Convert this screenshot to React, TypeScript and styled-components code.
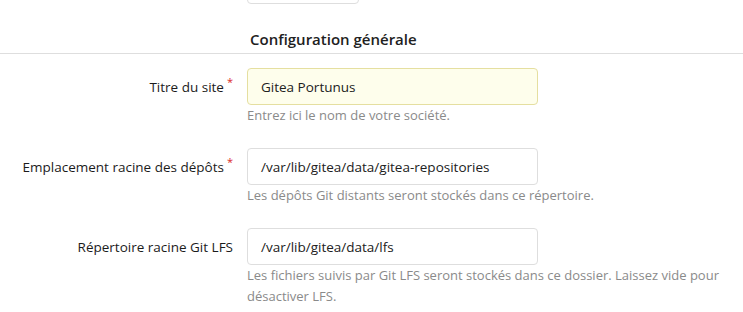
import styled, { createGlobalStyle } from 'styled-components';

const GlobalStyle = createGlobalStyle`
  html, body {
    margin: 0;
    padding: 0;
    background: #ffffff;
    overflow: hidden;
  }
  body {
    font-family: 'Open Sans', 'Noto Sans', sans-serif;
    color: #212121;
  }
`;

type Field = {
  label: string;
  value: string;
  help: string;
  required?: boolean;
  autofill?: boolean;
};

const fields: Field[] = [
  {
    label: 'Titre du site',
    value: 'Gitea Portunus',
    help: 'Entrez ici le nom de votre société.',
    required: true,
    autofill: true,
  },
  {
    label: 'Emplacement racine des dépôts',
    value: '/var/lib/gitea/data/gitea-repositories',
    help: 'Les dépôts Git distants seront stockés dans ce répertoire.',
    required: true,
  },
  {
    label: 'Répertoire racine Git LFS',
    value: '/var/lib/gitea/data/lfs',
    help: 'Les fichiers suivis par Git LFS seront stockés dans ce dossier. Laissez vide pour désactiver LFS.',
  },
];

const App = () => {
  return (
    <Page>
      <GlobalStyle />
      <TopStub />
      <Header>Configuration générale</Header>
      <Form>
        {fields.map((f) => (
          <FieldBlock key={f.label}>
            <Row>
              <Label>
                {f.label}
                {f.required && <Star>*</Star>}
              </Label>
              <Input $autofill={f.autofill}>{f.value}</Input>
            </Row>
            <Help>{f.help}</Help>
          </FieldBlock>
        ))}
      </Form>
    </Page>
  );
};

export default App;

const Page = styled.div`
  width: 743px;
  height: 312px;
  overflow: hidden;
`;

const TopStub = styled.div`
  margin: -34px 0 0 247px;
  width: 110px;
  height: 36px;
  border: 1px solid #dedede;
  border-radius: 4px;
`;

const Header = styled.h4`
  margin: 0;
  padding: 25px 0 0 250px;
  height: 24px;
  font-size: 15px;
  font-weight: 600;
  line-height: 20px;
  color: #212121;
  border-bottom: 1px solid #dedede;
`;

const Form = styled.div`
  display: flex;
  flex-direction: column;
  gap: 22px;
  padding-top: 14px;
`;

const FieldBlock = styled.div`
  display: flex;
  flex-direction: column;
`;

const Row = styled.div`
  display: flex;
  align-items: center;
  gap: 14px;
`;

const Label = styled.label`
  width: 233px;
  text-align: right;
  font-size: 13.5px;
  font-weight: 500;
  color: #1b1b1b;
  white-space: nowrap;
`;

const Star = styled.span`
  color: #db2828;
  font-size: 11px;
  margin-left: 3px;
  position: relative;
  top: -6px;
`;

const Input = styled.div<{ $autofill?: boolean }>`
  box-sizing: border-box;
  width: 291px;
  height: 37px;
  padding: 0 13px;
  display: flex;
  align-items: center;
  font-size: 13.5px;
  color: #212121;
  border-radius: 4px;
  border: 1px solid ${(p) => (p.$autofill ? '#e5dfa0' : '#dedede')};
  background: ${(p) => (p.$autofill ? '#fefeec' : '#ffffff')};
`;

const Help = styled.div`
  margin-left: 247px;
  margin-right: 14px;
  font-size: 13px;
  line-height: 21px;
  color: #8a8a8a;
`;
